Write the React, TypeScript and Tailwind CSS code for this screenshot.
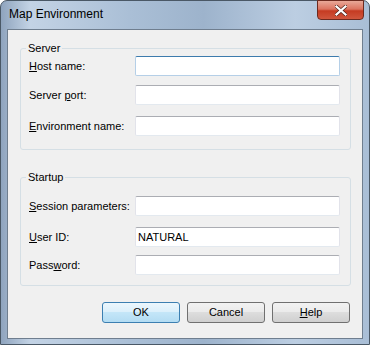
import React from 'react';

type Row = { label: React.ReactNode; value?: string; focused?: boolean; mt: string };

const u = (c: string) => <span className="underline underline-offset-[1px]">{c}</span>;

const serverRows: Row[] = [
  { label: <>{u('H')}ost name:</>, focused: true, mt: 'mt-0' },
  { label: <>Server {u('p')}ort:</>, mt: 'mt-[9px]' },
  { label: <>{u('E')}nvironment name:</>, mt: 'mt-[11px]' },
];

const startupRows: Row[] = [
  { label: <>{u('S')}ession parameters:</>, mt: 'mt-0' },
  { label: <>{u('U')}ser ID:</>, value: 'NATURAL', mt: 'mt-[11px]' },
  { label: <>Pass{u('w')}ord:</>, mt: 'mt-[8px]' },
];

const Field = ({ row }: { row: Row }) => (
  <div className={`flex items-center ${row.mt}`}>
    <label className="w-[114px] pl-[8px] text-[11px] leading-[13px] text-black">{row.label}</label>
    <input
      readOnly
      value={row.value ?? ''}
      className={`h-[20px] w-[205px] rounded-[2px] border bg-white px-[2px] text-[11px] text-black outline-none ${
        row.focused
          ? 'border-[#b5cfe7] border-t-[#3d7bad]'
          : 'border-[#e2e3ea] border-t-[#abadb3] border-b-[#e3e9ef]'
      }`}
    />
  </div>
);

const Group = ({ title, rows, cls }: { title: string; rows: Row[]; cls: string }) => (
  <fieldset className={`ml-[12px] w-[331px] rounded-[3px] border border-[#d5dfe5] ${cls}`}>
    <legend className="ml-[5px] px-[2px] text-[11px] leading-[13px] text-black">{title}</legend>
    {rows.map((r, i) => (
      <Field key={i} row={r} />
    ))}
  </fieldset>
);

const Btn = ({ children, primary }: { children: React.ReactNode; primary?: boolean }) => (
  <button
    className={`h-[21px] w-[78px] rounded-[3px] border text-[11px] text-black ${
      primary
        ? 'border-[#3c7fb1] bg-[linear-gradient(#ecf7fd_0%,#dcf0fb_45%,#c4e6f8_50%,#b3dcf3_100%)]'
        : 'border-[#707070] bg-[linear-gradient(#f2f2f2_0%,#ebebeb_45%,#dddddd_50%,#cfcfcf_100%)]'
    }`}
  >
    {children}
  </button>
);

export default function App() {
  return (
    <div className="flex h-[345px] w-[370px] flex-col rounded-t-[7px] border border-[#4a5866] bg-[linear-gradient(90deg,#8fa4be_0%,#c3d3e5_8%,#aabfd6_35%,#9db3cc_55%,#bccee2_80%,#a9bed6_100%)] font-['Liberation_Sans',Arial,sans-serif]">
      <div className="flex h-[28px] items-start justify-between">
        <span className="ml-[8px] mt-[6px] text-[12px] leading-[15px] text-black">Map Environment</span>
        <button className="mr-[5px] mt-[-1px] flex h-[20px] w-[47px] items-center justify-center rounded-b-[4px] border border-[#6d2a1f] bg-[linear-gradient(#e9a898_0%,#dc7460_45%,#c53b22_55%,#d0563d_100%)]">
          <svg width="12" height="11" viewBox="0 0 12 11">
            <path
              d="M1.5 1.5 L10.5 9.5 M10.5 1.5 L1.5 9.5"
              stroke="#4a2018"
              strokeWidth="3.6"
              strokeLinecap="square"
            />
            <path
              d="M1.5 1.5 L10.5 9.5 M10.5 1.5 L1.5 9.5"
              stroke="#ffffff"
              strokeWidth="2.2"
              strokeLinecap="square"
            />
          </svg>
        </button>
      </div>
      <div className="mx-[6px] flex h-[310px] flex-col border border-[#6f7e8f] bg-[#f0f0f0]">
        <Group title="Server" rows={serverRows} cls="mt-[12px] pt-[1px] pb-[13px]" />
        <Group title="Startup" rows={startupRows} cls="mt-[21px] pt-[12px] pb-[10px]" />
        <div className="mt-[16px] flex justify-end gap-[7px] pr-[12px]">
          <Btn primary>OK</Btn>
          <Btn>Cancel</Btn>
          <Btn>
            <span className="underline underline-offset-[1px]">H</span>elp
          </Btn>
        </div>
      </div>
    </div>
  );
}
